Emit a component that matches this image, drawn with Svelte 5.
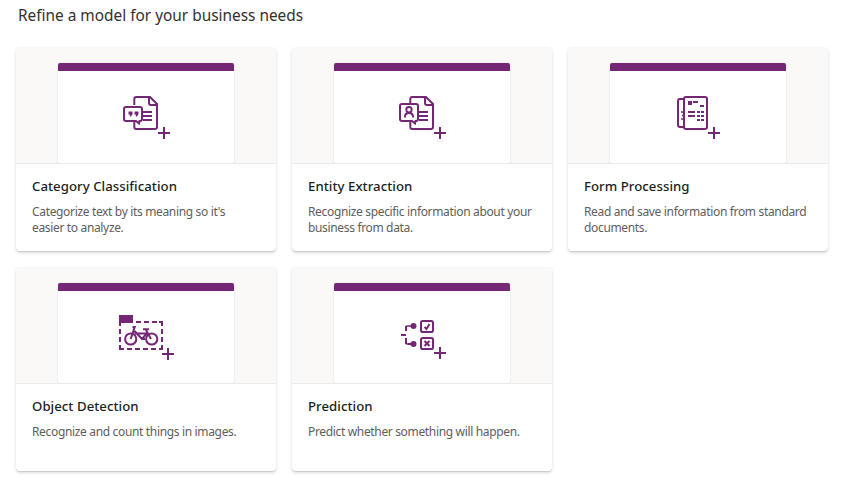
<script>
  const cards = [
    { icon: 'category', title: 'Category Classification', text: ["Categorize text by its meaning so it's", 'easier to analyze.'] },
    { icon: 'entity', title: 'Entity Extraction', text: ['Recognize specific information about your', 'business from data.'] },
    { icon: 'form', title: 'Form Processing', text: ['Read and save information from standard', 'documents.'] },
    { icon: 'object', title: 'Object Detection', text: ['Recognize and count things in images.'] },
    { icon: 'prediction', title: 'Prediction', text: ['Predict whether something will happen.'] }
  ];
</script>

<main>
  <h1>Refine a model for your business needs</h1>
  <div class="grid">
    {#each cards as card}
      <article class="card">
        <div class="preview">
          <div class="panel">
            <svg width="72" height="60" viewBox="0 0 72 60" fill="none" stroke="#742774" stroke-width="2">
              {#if card.icon === 'category' || card.icon === 'entity'}
                <path d="M24.300 20v-6q0-2 2-2H40l7 7v23q0 2-2 2H26.300q-2 0-2-2v-6" />
                <path d="M39 12v6q0 2 2 2h6" />
                <path d="M33 27h9M33 31h9M33 35h9" />
                {#if card.icon === 'category'}
                  <path d="M16 22h14q2 0 2 2v10q0 2-2 2h-.5l-.5 2.500-3-2.500H16q-2 0-2-2v-10q0-2 2-2z" fill="#fff" />
                  <path d="M18.500 26.500h4v2.500l-1.500 2.500h-1.200v-2h-1.300zM24.500 26.500h4v2.500l-1.500 2.500h-1.200v-2h-1.300z" fill="#742774" stroke="none" />
                {:else}
                  <path d="M16 19h14q2 0 2 2v13q0 2-2 2h-.5l-.5 2.500-3-2.500H16q-2 0-2-2V21q0-2 2-2z" fill="#fff" />
                  <circle cx="23" cy="24.700" r="2.700" stroke-width="1.900" />
                  <path d="M18.800 32.500q0-4.500 4.200-4.500t4.200 4.500" stroke-width="1.900" />
                {/if}
              {:else if card.icon === 'form'}
                <path d="M22 14h-4q-2 0-2 2v24q0 2 2 2h4" />
                <rect x="22" y="12" width="23" height="32" rx="2" fill="#fff" />
                <path d="M19 27h2M20 30.500h1M19 34h2" stroke-width="1.500" />
                <path d="M26 16h4v4h-4z" fill="#742774" stroke="none" />
                <path d="M31 17h5M38 21h4M26 27h7M26 31h7M35 27h3M39 27h3M35 31h3M39 31h3M35 35h3M39 35h3" stroke-width="1.900" />
              {:else if card.icon === 'object'}
                <path d="M9 10h14v8H9z" fill="#742774" stroke="none" />
                <path d="M26 17h5M34 17h5M42 17h5M49 17h3v4M52 24v5M52 32v5M52 40v4h-3M46 44h-5M38 44h-5M30 44h-5M22 44h-5M14 44h-4v-4M10 37v-5M10 29v-5M10 21v-3" />
                <g stroke-width="2">
                  <circle cx="20.700" cy="34" r="5.600" />
                  <circle cx="41.700" cy="34" r="5.600" />
                  <path d="M20.700 34l4-12h-2.200M24.500 26l7.500 8 6-7M24.500 28.500h12M32 34h3M33 24.200h6M36 25l5 9" />
                </g>
              {:else}
                <path d="M15 30h5M27 21h-2M20 21v5M20 33v6M27 39h-5" />
                <path d="M20 22q0-1 1-1h5M20 38q0 1 1 1h5" stroke-width="1.600" />
                <circle cx="27.500" cy="21" r="3" fill="#742774" stroke="none" />
                <circle cx="27.500" cy="39" r="3" fill="#742774" stroke="none" />
                <rect x="35" y="16" width="12" height="11" rx="1.800" />
                <rect x="35" y="33" width="12" height="11" rx="1.800" />
                <path d="M38.500 22l2 2 3-5M38.500 36l5 5M43.500 36l-5 5" />
              {/if}
              {#if card.icon === 'form'}
                <path d="M46 48h12M52 42v12" />
              {:else if card.icon === 'object'}
                <path d="M52 49h12M58 43v12" />
              {:else}
                <path d="M48 48h12M54 42v12" />
              {/if}
            </svg>
          </div>
        </div>
        <div class="body">
          <h2>{card.title}</h2>
          <p>{#each card.text as line}<span>{line}</span>{/each}</p>
        </div>
      </article>
    {/each}
  </div>
</main>

<style>
  :global(body) { background: #fff; }
  main {
    box-sizing: border-box;
    height: 484px;
    padding: 4px 0 0 16px;
    overflow: hidden;
    font-family: 'Noto Sans', 'Open Sans', sans-serif;
  }
  h1 {
    margin: 0 0 20px 2px;
    height: 24px;
    font-size: 15.4px;
    line-height: 24px;
    font-weight: 400;
    color: #323130;
    white-space: nowrap;
  }
  .grid { display: grid; grid-template-columns: repeat(3, 260px); gap: 16px; }
  .card {
    display: flex;
    flex-direction: column;
    height: 203px;
    margin-bottom: 1px;
    border-radius: 4px;
    overflow: hidden;
    background: #fff;
    box-shadow: 0 1.6px 3.6px rgba(0, 0, 0, .132), 0 .3px .9px rgba(0, 0, 0, .108);
  }
  .preview {
    display: flex;
    justify-content: center;
    align-items: flex-end;
    height: 115px;
    overflow: hidden;
    background: #faf9f8;
    border-bottom: 1px solid #edebe9;
  }
  .panel {
    box-sizing: border-box;
    display: flex;
    justify-content: center;
    width: 176px;
    height: 100px;
    padding-top: 14px;
    border-top: 8px solid #742774;
    border-radius: 2px;
    background: #fff;
    box-shadow: 0 .3px 1.800px rgba(0, 0, 0, .16);
  }
  .body { padding: 11px 16px 0; }
  h2 {
    margin: 0 0 7px;
    font-size: 13.2px;
    letter-spacing: .05px;
    line-height: 22px;
    font-weight: 500;
    color: #201f1e;
    white-space: nowrap;
  }
  p { margin: 0; font-size: 12px; letter-spacing: -.34px; line-height: 16px; color: #605e5c; }
  span { display: block; white-space: nowrap; }
</style>
